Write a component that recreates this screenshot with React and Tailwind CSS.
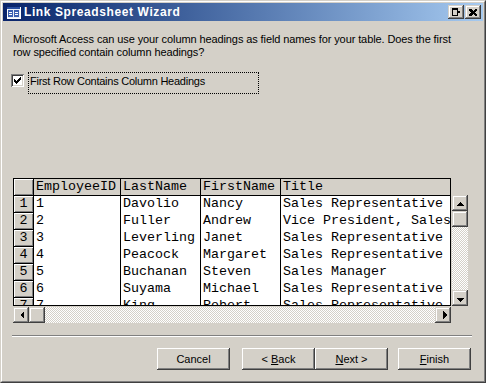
import React from 'react';

const raised =
  'shadow-[inset_-1px_-1px_0_#404040,inset_1px_1px_0_#d4d0c8,inset_-2px_-2px_0_#808080,inset_2px_2px_0_#ffffff]';
const btnRaised =
  'shadow-[inset_-1px_-1px_0_#404040,inset_1px_1px_0_#ffffff,inset_-2px_-2px_0_#808080,inset_2px_2px_0_#d4d0c8]';
const checker =
  'bg-[repeating-conic-gradient(#ffffff_0%_25%,#d4d0c8_0%_50%)] bg-[length:2px_2px]';

const rows = [
  ['1', 'Davolio', 'Nancy', 'Sales Representative'],
  ['2', 'Fuller', 'Andrew', 'Vice President, Sales'],
  ['3', 'Leverling', 'Janet', 'Sales Representative'],
  ['4', 'Peacock', 'Margaret', 'Sales Representative'],
  ['5', 'Buchanan', 'Steven', 'Sales Manager'],
  ['6', 'Suyama', 'Michael', 'Sales Representative'],
  ['7', 'King', 'Robert', 'Sales Representative'],
];

function Arrow({ dir }) {
  const pts = {
    up: '4,6 8,2 12,6',
    down: '4,3 8,7 12,3',
    left: '6,4 2,8 6,12',
    right: '3,4 7,8 3,12',
  }[dir];
  const box = dir === 'up' || dir === 'down' ? '0 -1 16 9' : '-1 0 9 16';
  return (
    <svg
      width={dir === 'up' || dir === 'down' ? 16 : 9}
      height={dir === 'up' || dir === 'down' ? 9 : 16}
      viewBox={box}
      shapeRendering="crispEdges"
    >
      <polygon points={pts} fill="#000" />
    </svg>
  );
}

function ScrollBtn({ dir }) {
  return (
    <div
      className={`w-[16px] h-[16px] shrink-0 bg-[#d4d0c8] flex items-center justify-center ${raised}`}
    >
      <Arrow dir={dir} />
    </div>
  );
}

function PushButton({ children, className = '' }) {
  return (
    <div
      className={`w-[73px] h-[22px] bg-[#d4d0c8] flex items-center justify-center text-[11px] text-black ${btnRaised} ${className}`}
    >
      {children}
    </div>
  );
}

function Cell({ children, w, header }) {
  return (
    <div
      className={`${w} shrink-0 h-full border-r border-black pl-[2px] whitespace-nowrap overflow-hidden leading-[16px] ${
        header ? 'bg-[#d4d0c8]' : 'bg-white'
      }`}
    >
      {children}
    </div>
  );
}

export default function App() {
  return (
    <div
      className="w-[486px] h-[383px] bg-[#d4d0c8] border border-t-[#d4d0c8] border-l-[#d4d0c8] border-r-[#404040] border-b-[#404040] text-black"
      style={{ fontFamily: '"Liberation Sans", Arial, sans-serif' }}
    >
      <div className="h-full border border-t-white border-l-white border-r-[#808080] border-b-[#808080] p-px flex flex-col">
        {/* title bar */}
        <div className="h-[18px] shrink-0 flex items-center bg-gradient-to-r from-[#0a246a] to-[#a6caf0] pl-[2px] pr-[2px]">
          <svg width="16" height="16" viewBox="0 0 16 16" shapeRendering="crispEdges">
            <rect x="2" y="3" width="13" height="11" fill="#e8eef8" stroke="#ffffff" />
            <rect x="2" y="3" width="13" height="2" fill="#2a4fa0" />
            <rect x="3" y="6" width="5" height="7" fill="#3b5fb0" />
            <rect x="9" y="6" width="5" height="7" fill="#3b5fb0" />
            <rect x="4" y="8" width="3" height="1" fill="#ffffff" />
            <rect x="4" y="10" width="3" height="1" fill="#ffffff" />
            <rect x="10" y="8" width="3" height="1" fill="#ffffff" />
            <rect x="10" y="10" width="3" height="1" fill="#ffffff" />
          </svg>
          <span className="ml-[3px] text-[12px] tracking-[0.6px] font-bold text-white leading-none">
            Link Spreadsheet Wizard
          </span>
          <div className="ml-auto flex">
            <div className={`w-[16px] h-[14px] bg-[#d4d0c8] flex items-center justify-center ${raised}`}>
              <svg width="9" height="8" viewBox="0 0 9 8" shapeRendering="crispEdges">
                <path d="M0.5 0.5H5.5V7.5H0.5Z" fill="none" stroke="#000" />
                <rect x="0" y="0" width="6" height="2" fill="#000" />
                <polygon points="5,1.5 8.5,4 5,6.5" fill="#000" />
              </svg>
            </div>
            <div className={`ml-px w-[16px] h-[14px] bg-[#d4d0c8] flex items-center justify-center ${raised}`}>
              <svg width="8" height="7" viewBox="0 0 8 7" shapeRendering="crispEdges">
                <path d="M0 0h2l2 2 2-2h2v1L6 3.5 8 6v1H6L4 5 2 7H0V6l2-2.5L0 1Z" fill="#000" />
              </svg>
            </div>
          </div>
        </div>

        {/* content */}
        <div className="flex-1 flex flex-col px-[8px]">
          <p className="mt-[12px] ml-[2px] text-[11px] tracking-[-0.1px] leading-[13px] whitespace-nowrap">
            Microsoft Access can use your column headings as field names for your table. Does the first
            <br />
            row specified contain column headings?
          </p>

          <div className="mt-[13px] flex items-start h-[22px]">
            <div className="mt-[2px] w-[13px] h-[13px] bg-white shadow-[inset_1px_1px_0_#808080,inset_-1px_-1px_0_#ffffff,inset_2px_2px_0_#404040,inset_-2px_-2px_0_#d4d0c8] flex items-center justify-center">
              <svg width="7" height="7" viewBox="0 0 7 7" shapeRendering="crispEdges">
                <path d="M0 2h1v1h1v1h1V3h1V2h1V1h1V0h1v3H6v1H5v1H4v1H3v1H2V6H1V5H0Z" fill="#000" />
              </svg>
            </div>
            <div className="ml-[4px] h-[22px] w-[231px] border border-dotted border-black pl-[1px] pt-[2px] text-[11px] tracking-[-0.25px] leading-[13px]">
              First Row Contains Column Headings
            </div>
          </div>

          {/* grid */}
          <div
            className="mt-[84px] ml-[2px] flex flex-col text-[13.33px] text-black"
            style={{ fontFamily: '"Liberation Mono", "Courier New", monospace' }}
          >
            <div className="flex">
              <div className="w-[438px] h-[128px] border border-black overflow-hidden bg-white flex flex-col">
                <div className="h-[17px] shrink-0 flex border-b border-black bg-[#d4d0c8]">
                  <div className="w-[20px] shrink-0 h-full border-r border-black shadow-[inset_1px_1px_0_#ffffff,inset_-1px_-1px_0_#808080]" />
                  <Cell w="w-[87px]" header>EmployeeID</Cell>
                  <Cell w="w-[80px]" header>LastName</Cell>
                  <Cell w="w-[80px]" header>FirstName</Cell>
                  <Cell w="w-[200px]" header>Title</Cell>
                </div>
                {rows.map((r) => (
                  <div key={r[0]} className="h-[17px] shrink-0 flex">
                    <div className="w-[20px] shrink-0 h-full border-r border-b border-black bg-[#d4d0c8] shadow-[inset_1px_1px_0_#ffffff,inset_-1px_-1px_0_#808080] flex items-center justify-center leading-none">
                      {r[0]}
                    </div>
                    <Cell w="w-[87px]">{r[0]}</Cell>
                    <Cell w="w-[80px]">{r[1]}</Cell>
                    <Cell w="w-[80px]">{r[2]}</Cell>
                    <Cell w="w-[200px]">{r[3]}</Cell>
                  </div>
                ))}
              </div>
              <div className={`ml-px mt-[17px] w-[16px] h-[111px] flex flex-col ${checker}`}>
                <ScrollBtn dir="up" />
                <div className={`w-[16px] h-[16px] bg-[#d4d0c8] ${raised}`} />
                <div className="flex-1" />
                <ScrollBtn dir="down" />
              </div>
            </div>
            <div className={`mt-px w-[438px] h-[16px] flex ${checker}`}>
              <ScrollBtn dir="left" />
              <div className={`w-[16px] h-[16px] bg-[#d4d0c8] ${raised}`} />
              <div className="flex-1" />
              <ScrollBtn dir="right" />
            </div>
          </div>

          {/* separator */}
          <div className="mt-[12px] ml-px w-[460px] h-[2px] border-t border-[#808080] border-b border-b-white" />

          {/* buttons */}
          <div className="mt-[11px] flex pl-[146px]">
            <PushButton>Cancel</PushButton>
            <PushButton className="ml-[12px]">
              &lt; <span className="underline ml-[3px]">B</span>ack
            </PushButton>
            <PushButton>
              <span className="underline">N</span>ext &gt;
            </PushButton>
            <PushButton className="ml-[10px]">
              <span className="underline">F</span>inish
            </PushButton>
          </div>
        </div>
      </div>
    </div>
  );
}
